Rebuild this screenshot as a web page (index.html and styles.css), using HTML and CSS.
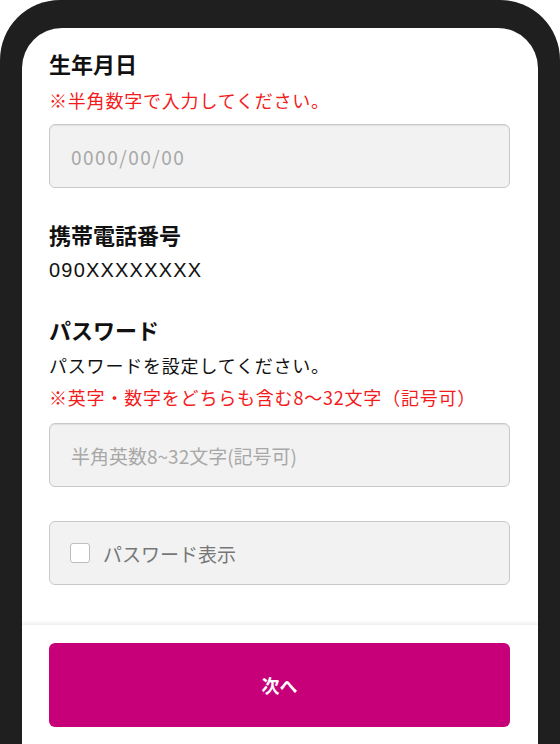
FILE: index.html
```html
<!DOCTYPE html>
<html lang="ja">
<head>
  <meta charset="UTF-8" />
  <meta name="viewport" content="width=device-width, initial-scale=1" />
  <title>会員登録 - 入力</title>
  <link rel="stylesheet" href="styles.css">
</head>
<body>
  <div class="phone">
    <div class="screen">
      <main class="form" role="main">
        <section class="field field-birth">
          <h2 class="field-label">生年月日</h2>
          <p class="note">※半角数字で入力してください。</p>
          <div class="text-input">
            <input type="text" placeholder="0000/00/00" aria-label="生年月日">
          </div>
        </section>

        <section class="field field-tel">
          <h2 class="field-label">携帯電話番号</h2>
          <p class="value">090XXXXXXXX</p>
        </section>

        <section class="field field-pass">
          <h2 class="field-label">パスワード</h2>
          <p class="desc">パスワードを設定してください。</p>
          <p class="note">※英字・数字をどちらも含む8〜32文字（記号可）</p>
          <div class="text-input">
            <input type="password" placeholder="半角英数8~32文字(記号可)" aria-label="パスワード">
          </div>
          <label class="check-box">
            <span class="check-mark"></span>
            <span class="check-text">パスワード表示</span>
          </label>
        </section>
      </main>

      <footer class="footer">
        <button class="next-btn" type="button">次へ</button>
      </footer>
    </div>
  </div>
</body>
</html>
```

FILE: styles.css
```css
:root {
  --frame-color: #1f1f1f;
  --text-color: #111;
  --note-color: #f31c1c;
  --input-bg: #f2f2f2;
  --input-border: #c9c9c9;
  --placeholder: #a8a8a8;
  --primary: #c7007a;
  --radius: 6px;
  --font-family: "Noto Sans CJK JP", "Noto Sans", sans-serif;
}
* {
  box-sizing: border-box;
}
body {
  margin: 0;
  background: #fff;
  font-family: var(--font-family);
  color: var(--text-color);
}
.phone {
  background: var(--frame-color);
  border-radius: 60px 60px 0 0;
  padding: 28px 22px 0;
  height: 744px;
  overflow: hidden;
}
.screen {
  background: #fff;
  border-radius: 40px 40px 0 0;
  height: 100%;
  display: flex;
  flex-direction: column;
}
.form {
  flex: 1;
  padding: 20px 28px 0 27px;
}
.field-label {
  margin: 0;
  font-size: 22px;
  font-weight: 700;
  line-height: 30px;
}
.note,
.desc,
.value {
  margin: 0;
  line-height: 30px;
}
.note,
.desc {
  font-size: 18px;
  letter-spacing: 0.8px;
}
.note {
  color: var(--note-color);
}
.value {
  font-family: "Liberation Sans", sans-serif;
  font-size: 20px;
  letter-spacing: 1.2px;
}
.field-birth .note {
  margin-top: 7px;
}
.field-birth .text-input {
  margin-top: 9px;
}
.field-tel {
  margin-top: 31px;
}
.field-tel .value {
  margin-top: 6px;
}
.field-pass {
  margin-top: 29px;
}
.field-pass .desc {
  margin-top: 6px;
}
.field-pass .note {
  margin-top: 2px;
}
.field-pass .text-input {
  margin-top: 11px;
}
.text-input input {
  display: block;
  width: 100%;
  height: 64px;
  padding: 0 21px;
  border: 1px solid var(--input-border);
  border-radius: var(--radius);
  background: var(--input-bg);
  box-shadow: inset 0 1px 1px rgba(0,0,0,0.08);
  font-family: var(--font-family);
  font-size: 19px;
  color: var(--text-color);
  outline: none;
}
.field-birth input {
  letter-spacing: 1.5px;
}
.text-input input::placeholder {
  color: var(--placeholder);
}
.check-box {
  margin-top: 34px;
  height: 64px;
  display: flex;
  align-items: center;
  gap: 13px;
  padding: 0 20px;
  border: 1px solid var(--input-border);
  border-radius: var(--radius);
  background: var(--input-bg);
  cursor: pointer;
}
.check-mark {
  width: 20px;
  height: 20px;
  border: 1px solid #bdbdbd;
  border-radius: 3px;
  background: #fff;
  flex-shrink: 0;
}
.check-text {
  font-size: 19px;
  color: #777;
}
.footer {
  background: #fff;
  box-shadow: 0 -2px 4px rgba(0,0,0,0.08);
  padding: 18px 28px 17px 27px;
}
.next-btn {
  display: block;
  width: 100%;
  height: 84px;
  border: none;
  border-radius: var(--radius);
  background: var(--primary);
  color: #fff;
  font-family: var(--font-family);
  font-size: 18px;
  font-weight: 700;
  cursor: pointer;
}
```
